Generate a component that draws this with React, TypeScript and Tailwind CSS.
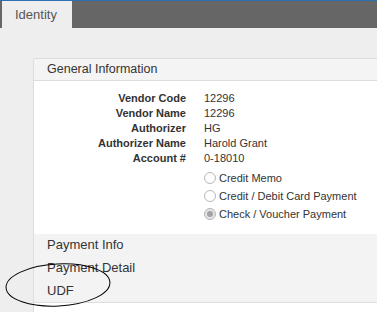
import React from 'react';

const fields = [
  { label: 'Vendor Code', value: '12296' },
  { label: 'Vendor Name', value: '12296' },
  { label: 'Authorizer', value: 'HG' },
  { label: 'Authorizer Name', value: 'Harold Grant' },
  { label: 'Account #', value: '0-18010' },
];

const paymentTypes = [
  { label: 'Credit Memo', checked: false },
  { label: 'Credit / Debit Card Payment', checked: false },
  { label: 'Check / Voucher Payment', checked: true },
];

const Radio: React.FC<{ checked: boolean }> = ({ checked }) => (
  <span
    className={
      checked
        ? 'w-[12px] h-[12px] rounded-full border border-[#b4b4b4] bg-[#e6e6e6] flex items-center justify-center shrink-0'
        : 'w-[12px] h-[12px] rounded-full border border-[#b8b8b8] bg-white shrink-0'
    }
  >
    {checked && <span className="w-[6px] h-[6px] rounded-full bg-[#a3a3a3]" />}
  </span>
);

export default function App() {
  return (
    <div
      className="relative w-[377px] h-[312px] overflow-hidden bg-[#eeeeee] text-[#333]"
      style={{ fontFamily: '"Liberation Sans", Arial, sans-serif' }}
    >
      {/* Tab bar */}
      <div className="h-[28px] bg-[#666666] border-t border-[#2f6db5] flex items-stretch pl-[2px]">
        <div className="bg-[#eeeeee] pl-[13px] pr-[15px] flex items-center text-[13px] text-[#555]">Identity</div>
      </div>

      {/* Panel */}
      <div className="ml-[33px] mt-[30px] bg-white border-l border-t border-[#dddddd] rounded-tl-[3px] h-[260px]">
        <div className="h-[22px] bg-[#f4f4f4] border-b border-[#dddddd] rounded-tl-[3px] flex items-center pl-[13px] text-[12.5px]">
          General Information
        </div>

        <div className="pt-[10px] pb-[11px]">
          <div className="grid grid-cols-[152px_1fr] gap-x-[18px] text-[11px]">
            {fields.map((f) => (
              <React.Fragment key={f.label}>
                <div className="h-[15px] leading-[15px] text-right font-bold">{f.label}</div>
                <div className="h-[15px] leading-[15px]">{f.value}</div>
              </React.Fragment>
            ))}
          </div>
          <div className="mt-[3px] ml-[170px] flex flex-col text-[11px]">
            {paymentTypes.map((p) => (
              <div key={p.label} className="h-[18px] flex items-center gap-[3px]">
                <Radio checked={p.checked} />
                <span>{p.label}</span>
              </div>
            ))}
          </div>
        </div>

        <div className="bg-[#f3f3f3] border-b border-[#dddddd] flex flex-col pl-[13px] text-[13px]">
          <div className="h-[23px] leading-[22px]">Payment Info</div>
          <div className="h-[23px] leading-[22px]">Payment Detail</div>
          <div className="h-[22px] leading-[22px]">UDF</div>
        </div>
      </div>

      {/* Hand-drawn annotation */}
      <svg className="absolute left-0 top-0 pointer-events-none" width="377" height="312">
        <ellipse cx="58" cy="285" rx="52" ry="21" fill="none" stroke="#000" strokeWidth="1" transform="rotate(-3 58 285)" />
      </svg>
    </div>
  );
}
